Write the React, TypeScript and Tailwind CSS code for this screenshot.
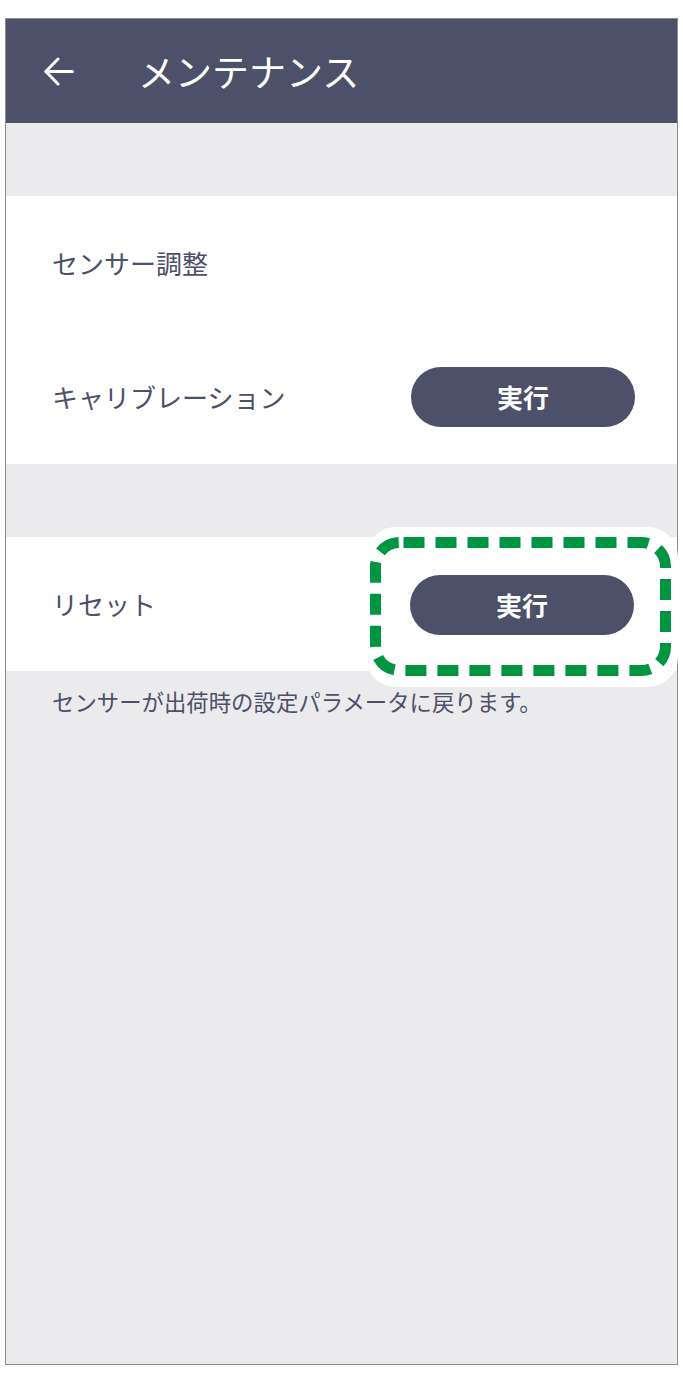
import React from 'react';

const font = { fontFamily: '"Noto Sans CJK JP", "Noto Sans", sans-serif' };

const RunButton: React.FC = () => (
  <button className="w-[224px] h-[60px] rounded-full bg-[#4c5068] text-white text-[26px] font-bold leading-none flex items-center justify-center">
    実行
  </button>
);

const Row: React.FC<{ label: string; action?: boolean }> = ({ label, action }) => (
  <div className="h-[134px] flex items-center justify-between pl-[46px] pr-[42px]">
    <span className="text-[26px] text-[#4c5068] leading-none">{label}</span>
    {action && <RunButton />}
  </div>
);

export default function App() {
  return (
    <div className="relative w-[683px] h-[1393px] bg-white overflow-hidden" style={font}>
      <div className="ml-[5px] mt-[18px] w-[673px] h-[1347px] border border-[#8c8c8c] bg-[#ebebee] flex flex-col">
        {/* Header */}
        <div className="h-[104px] bg-[#4c5068] flex items-center shrink-0">
          <svg className="ml-[38px] w-[30px] h-[29px]" viewBox="0 0 30 29" fill="none">
            <path d="M28.5 14.5H2.5M14 2L1.8 14.5L14 27" stroke="white" strokeWidth="3" strokeLinecap="round" strokeLinejoin="round" />
          </svg>
          <h1 className="ml-[64px] text-[37px] text-white font-normal leading-none">メンテナンス</h1>
        </div>

        <div className="h-[73px] shrink-0" />

        {/* Sensor adjustment */}
        <div className="bg-white">
          <Row label="センサー調整" />
          <Row label="キャリブレーション" action />
        </div>

        <div className="h-[73px] shrink-0" />

        {/* Reset */}
        <div className="bg-white">
          <Row label="リセット" action />
        </div>
        <p className="pl-[46px] pt-[14px] text-[22.4px] leading-[32px] text-[#4c5068]">
          センサーが出荷時の設定パラメータに戻ります。
        </p>
      </div>

      {/* highlight annotation */}
      <svg className="absolute left-[364px] top-[525px] pointer-events-none" width="319" height="164" viewBox="0 0 319 164">
        <rect x="2" y="2" width="312" height="160" rx="30" fill="white" />
        <rect
          x="11.5"
          y="17.5"
          width="290"
          height="128"
          rx="24"
          fill="none"
          stroke="#009540"
          strokeWidth="11"
          strokeDasharray="21 11"
          strokeDashoffset="-4"
        />
      </svg>
      <div className="absolute left-[410px] top-[575px]">
        <RunButton />
      </div>
    </div>
  );
}
